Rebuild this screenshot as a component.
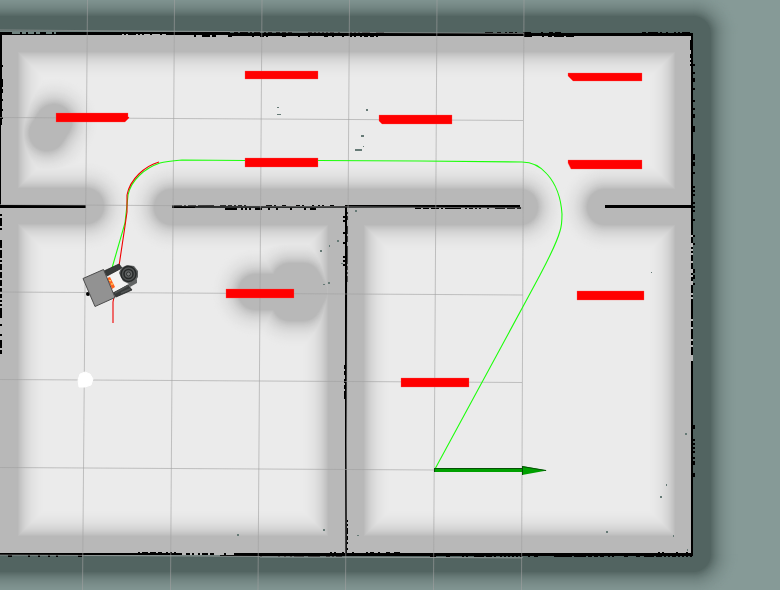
import React from "react";

const WALLS = [
  "M0 34H693V554H0Z",
  "M0 206H86",
  "M172 207H520",
  "M605 207H693",
  "M346 207V554",
];
const OBSTACLES = ["M47 133L54 122", "M256 292H292", "M290 281H303L309 292L303 303H290Z"];
const RADIUS = 18;
const FADE = 27;

const mix = (a, b, t) => `rgb(${a.map((v, i) => Math.round(v + (b[i] - v) * t)).join(",")})`;

function Costmap({ near, far, shapes }) {
  const layers = [];
  for (let d = FADE; d >= 0; d--) {
    const t = 1 - Math.exp(-d / 11) * (1 - (d / FADE) ** 2);
    layers.push(
      <path
        key={d}
        d={shapes.join("")}
        fill="none"
        stroke={mix(near, far, t)}
        strokeWidth={2 * (RADIUS + d)}
        strokeLinejoin="round"
        strokeLinecap="round"
      />
    );
  }
  return <g>{layers}</g>;
}

function seeded(seed) {
  let s = seed;
  return () => {
    s = (s * 16807) % 2147483647;
    return s / 2147483647;
  };
}

// Ragged laser returns along a wall: [axis, start, end, offset, density, seed, colour]
const RETURNS = [
  ["h", 2, 58, 32, 0.6, 12, "#70827f"],
  ["h", 115, 178, 32, 0.65, 31, "#000"],
  ["h", 178, 385, 32, 0.5, 44, "#000"],
  ["h", 178, 385, 35, 0.25, 75, "#000"],
  ["h", 122, 165, 34, 0.55, 71, "#b8b8b8"],
  ["h", 485, 560, 32, 0.6, 85, "#000"],
  ["h", 520, 575, 35, 0.6, 91, "#000"],
  ["h", 640, 693, 32, 0.55, 96, "#000"],
  ["h", 172, 245, 205, 0.7, 101, "#000"],
  ["h", 225, 260, 208, 0.6, 104, "#000"],
  ["h", 260, 345, 205, 0.5, 109, "#000"],
  ["h", 260, 320, 208, 0.2, 115, "#000"],
  ["h", 415, 520, 207, 0.7, 118, "#000"],
  ["h", 2, 82, 555, 0.35, 120, "#000"],
  ["h", 132, 175, 552, 0.5, 125, "#000"],
  ["h", 180, 235, 553, 0.3, 127, "#b8b8b8"],
  ["h", 260, 346, 555, 0.5, 131, "#000"],
  ["h", 330, 400, 552, 0.5, 132, "#000"],
  ["h", 430, 490, 555, 0.5, 135, "#000"],
  ["h", 490, 660, 555, 0.55, 137, "#000"],
  ["h", 658, 692, 555, 0.7, 139, "#000"],
  ["h", 658, 692, 552, 0.35, 149, "#000"],
  ["v", 35, 125, 1, 0.25, 151, "#000"],
  ["v", 210, 353, 0, 0.5, 154, "#000"],
  ["v", 210, 265, 343, 0.35, 159, "#000"],
  ["v", 210, 282, 346, 0.6, 161, "#000"],
  ["v", 365, 398, 344, 0.5, 164, "#000"],
  ["v", 520, 552, 346, 0.6, 171, "#000"],
  ["v", 40, 66, 690, 0.6, 181, "#000"],
  ["v", 60, 215, 693, 0.32, 185, "#000"],
  ["v", 215, 295, 693, 0.3, 188, "#000"],
  ["v", 225, 365, 691, 0.3, 191, "#b8b8b8"],
  ["v", 425, 480, 693, 0.5, 195, "#000"],
];

function Returns() {
  return RETURNS.map(([axis, from, to, at, density, seed, colour], i) => {
    const rand = seeded(seed * 7919);
    let d = "";
    for (let p = from; p < to; p += 2) {
      if (rand() < density) d += axis === "h" ? `M${p} ${at}h2v2h-2z` : `M${at} ${p}h2v2h-2z`;
    }
    return <path key={i} d={d} fill={colour} />;
  });
}

const SPECKS = [
  [277, 107, 2, 1], [277, 114, 4, 1], [366, 109, 2, 2], [361, 135, 3, 2], [363, 146, 1, 1], [355, 149, 7, 2],
  [355, 210, 2, 2], [337, 240, 2, 2], [329, 245, 1, 2], [320, 250, 2, 2], [341, 263, 2, 1], [328, 282, 2, 2],
  [323, 284, 2, 1], [651, 272, 1, 1], [237, 534, 2, 2], [323, 529, 2, 2], [357, 535, 2, 1], [606, 531, 2, 2],
  [673, 535, 1, 2], [666, 484, 1, 2], [660, 496, 2, 2], [685, 433, 2, 2], [687, 549, 1, 2],
];

const BARS = [
  "M56 113H128V117H129V118L125 122H56Z",
  "M245 71H318V79H245Z",
  "M379 115H452V124H382L379 121Z",
  "M568 73H642V81H573L568 76Z",
  "M245 158H318V167H245Z",
  "M568 160H642V169H571L568 163Z",
  "M226 289H294V298H226Z",
  "M577 291H644V300H577Z",
  "M401 378H469V387H401Z",
];

function Robot() {
  return (
    <g>
      <path d="M105 274L120 267L130 286L115 293Z" fill="#f2f2f2" />
      <circle cx="88" cy="294" r="2" fill="#000" />
      <path d="M104 271L119 264L122 268L107 276Z" fill="#383b3b" stroke="#242626" strokeWidth="0.8" />
      <path d="M113 293L128 285L132 290L116 297Z" fill="#373a3a" stroke="#242626" strokeWidth="0.8" />
      <path d="M115 293L136 281M121 293L130 289" stroke="#505353" strokeWidth="1.5" />
      <path d="M129 284L137 279L137 283L130 287Z" fill="#606363" />
      <path d="M107 278L110 277L115 287L112 289Z" fill="#ff611e" />
      <path d="M109 280L111 281M111 284L113 284" stroke="#fff275" strokeWidth="1" />
      <path d="M83 278.500L103.500 269.500L115 297.500L95 306.500Z" fill="#929292" stroke="#4c4c4c" strokeWidth="1" />
      <path d="M121 268L127 265L134 266L138 271L138 277L135 282L129 284L123 281L119 273Z" fill="#606363" />
      <circle cx="128.500" cy="274" r="7.500" fill="#505353" stroke="#252828" strokeWidth="1.500" />
      <circle cx="128.500" cy="274" r="4.500" fill="#5d6060" stroke="#252828" strokeWidth="1.500" />
      <circle cx="128.500" cy="274" r="2" fill="#777a7a" stroke="#303333" />
    </g>
  );
}

export default function App() {
  return (
    <main className="w-full overflow-hidden bg-[#869a97]">
      <svg viewBox="0 0 780 590" className="block h-auto w-full" role="img" aria-label="Navigation map">
        <defs>
          <clipPath id="interior">
            <path d="M0 34H693V554H0Z" />
          </clipPath>
        </defs>

        <rect width="780" height="590" fill="#869a97" />
        <Costmap near={[82, 100, 97]} far={[134, 154, 151]} shapes={WALLS.slice(0, 1)} />

        <g clipPath="url(#interior)">
          <rect width="693" height="554" fill="#ebebeb" />
          <Costmap near={[184, 184, 184]} far={[235, 235, 235]} shapes={[...WALLS, ...OBSTACLES]} />
        </g>

        <g shapeRendering="crispEdges">
          <path
            d="M0 32H230V35H0ZM230 33H485V36H230ZM485 33H693V36H485ZM0 34H2V125H0ZM0 125H1V206H0ZM0 205H86V208H0ZM172 206H345V208H172ZM345 205H520V208H345ZM605 205H693V208H605ZM345 208H347V554H345ZM691 34H693V554H691ZM0 553H170V555H0ZM170 553H693V556H170Z"
            fill="#000"
          />
          <path d="M0 31H230M85 555H220M260 557H523" stroke="#70827f" />
          <path d="M195 207H345M347 207H415" stroke="#2c2f2f" />
          <Returns />
          {SPECKS.map(([x, y, w, h]) => (
            <rect key={`${x}-${y}`} x={x} y={y} width={w} height={h} fill="#667a76" />
          ))}
        </g>

        <g stroke="#a0a0a0" strokeOpacity="0.6">
          <path d="M87.500 0L82.500 590M174.500 0L170.500 590M262 0L258 590M349.500 0L345.500 590M437 0L433.500 590M524 0L521.500 590" />
          <path d="M0 30L524 33.500M0 117.500L523 120.500M0 204.500L523 208M0 292L523 295M0 379.500L522 382.500M0 467.500L522 470.500M0 555L522 558" />
        </g>

        <path d="M78 380L80 374L85 372L90 374L93 379L91 385L85 387L79 387Z" fill="#fff" stroke="#fff" strokeLinejoin="round" />

        <g fill="#f00" stroke="#ff5b5b" strokeOpacity="0.5" strokeWidth="0.600">
          {BARS.map((d) => (
            <path key={d} d={d} />
          ))}
        </g>

        <path
          d="M435 469L526 301L540 275C549 258 557 242 560 231C562 225 562 218 562 214C561 198 556 184 547 174C541 167 533 162 522 162L420 161L318 160.500M245 160.500L182 160C172 161 164 162 160 163C145 168 131 180 128 195L127 205L125 223L112 268"
          fill="none"
          stroke="#1bff09"
          strokeWidth="1.1"
        />
        <path
          d="M159 162C145 166 130 179 127 195L127 212L125 226L119 266M114 297L113 302V323"
          fill="none"
          stroke="#f00000"
          strokeWidth="1.1"
        />

        <path d="M434 468H523L522 466L547 470.500L522 475V472H434Z" fill="#00a000" />
        <path d="M434 468.500H522M434.500 468V472M522.500 466V475M522 466.500L546 470.500" stroke="#064f06" fill="none" />

        <Robot />
      </svg>
    </main>
  );
}
